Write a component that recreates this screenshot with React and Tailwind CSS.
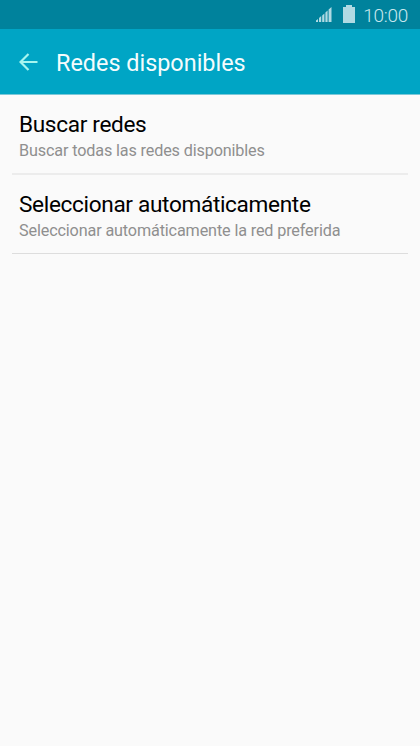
const networkOptions = [
  {
    title: "Buscar redes",
    description: "Buscar todas las redes disponibles",
    divider: "border-b-2 border-[#ececec]",
  },
  {
    title: "Seleccionar automáticamente",
    description: "Seleccionar automáticamente la red preferida",
    divider: "border-b border-[#dddddd]",
  },
];

function StatusBar() {
  return (
    <div className="flex h-[29px] items-center justify-end bg-[#00829c] pr-[12px] pb-px text-[#b0dae3]">
      <svg className="mr-[11px] h-[16px] w-[16px]" viewBox="0 0 16 16" fill="currentColor">
        <path d="M0 16v-1.500l2-1.500v3zM3 16v-4l2.200-2v6zM6.200 16V9.500l2.200-2V16zM9.400 16V6.500l2.200-2V16zM12.600 16V3.500L15.500 1V16z" />
      </svg>
      <svg className="mr-[8px] h-[18px] w-[12px]" viewBox="0 0 12 18" fill="currentColor">
        <path d="M3 0h6v2h3v16H0V2h3z" />
      </svg>
      <span className="pt-[2px] text-[19px] leading-none font-light tracking-[-0.3px] text-[#c8e8ee]">
        10:00
      </span>
    </div>
  );
}

function Header() {
  return (
    <header className="flex h-[66px] items-center border-b border-[#7cc8d8] bg-[#00a5c5] pl-[19px] text-[#f4fcfd]">
      <svg
        className="mr-[18px] h-[18px] w-[19px] text-[#a6f5ef]"
        viewBox="0 0 19 18"
        fill="none"
        stroke="currentColor"
        strokeWidth="2.2"
      >
        <path d="M9.500 1 1.500 9l8 8M1.500 9H18.500" />
      </svg>
      <h1 className="pt-[4px] text-[23.4px] leading-none">Redes disponibles</h1>
    </header>
  );
}

function App() {
  return (
    <div className="min-h-screen bg-[#fafafa] font-['Roboto',sans-serif]">
      <StatusBar />
      <Header />
      <ul className="px-[12px]">
        {networkOptions.map((option) => (
          <li key={option.title} className={`h-[79.5px] px-[7px] pt-[15px] ${option.divider}`}>
            <p className="text-[22.6px] leading-[29px] tracking-[-0.33px] text-black">
              {option.title}
            </p>
            <p className="text-[16.2px] leading-[24px] tracking-[-0.14px] text-[#8f8f8f]">
              {option.description}
            </p>
          </li>
        ))}
      </ul>
    </div>
  );
}

export default App;
